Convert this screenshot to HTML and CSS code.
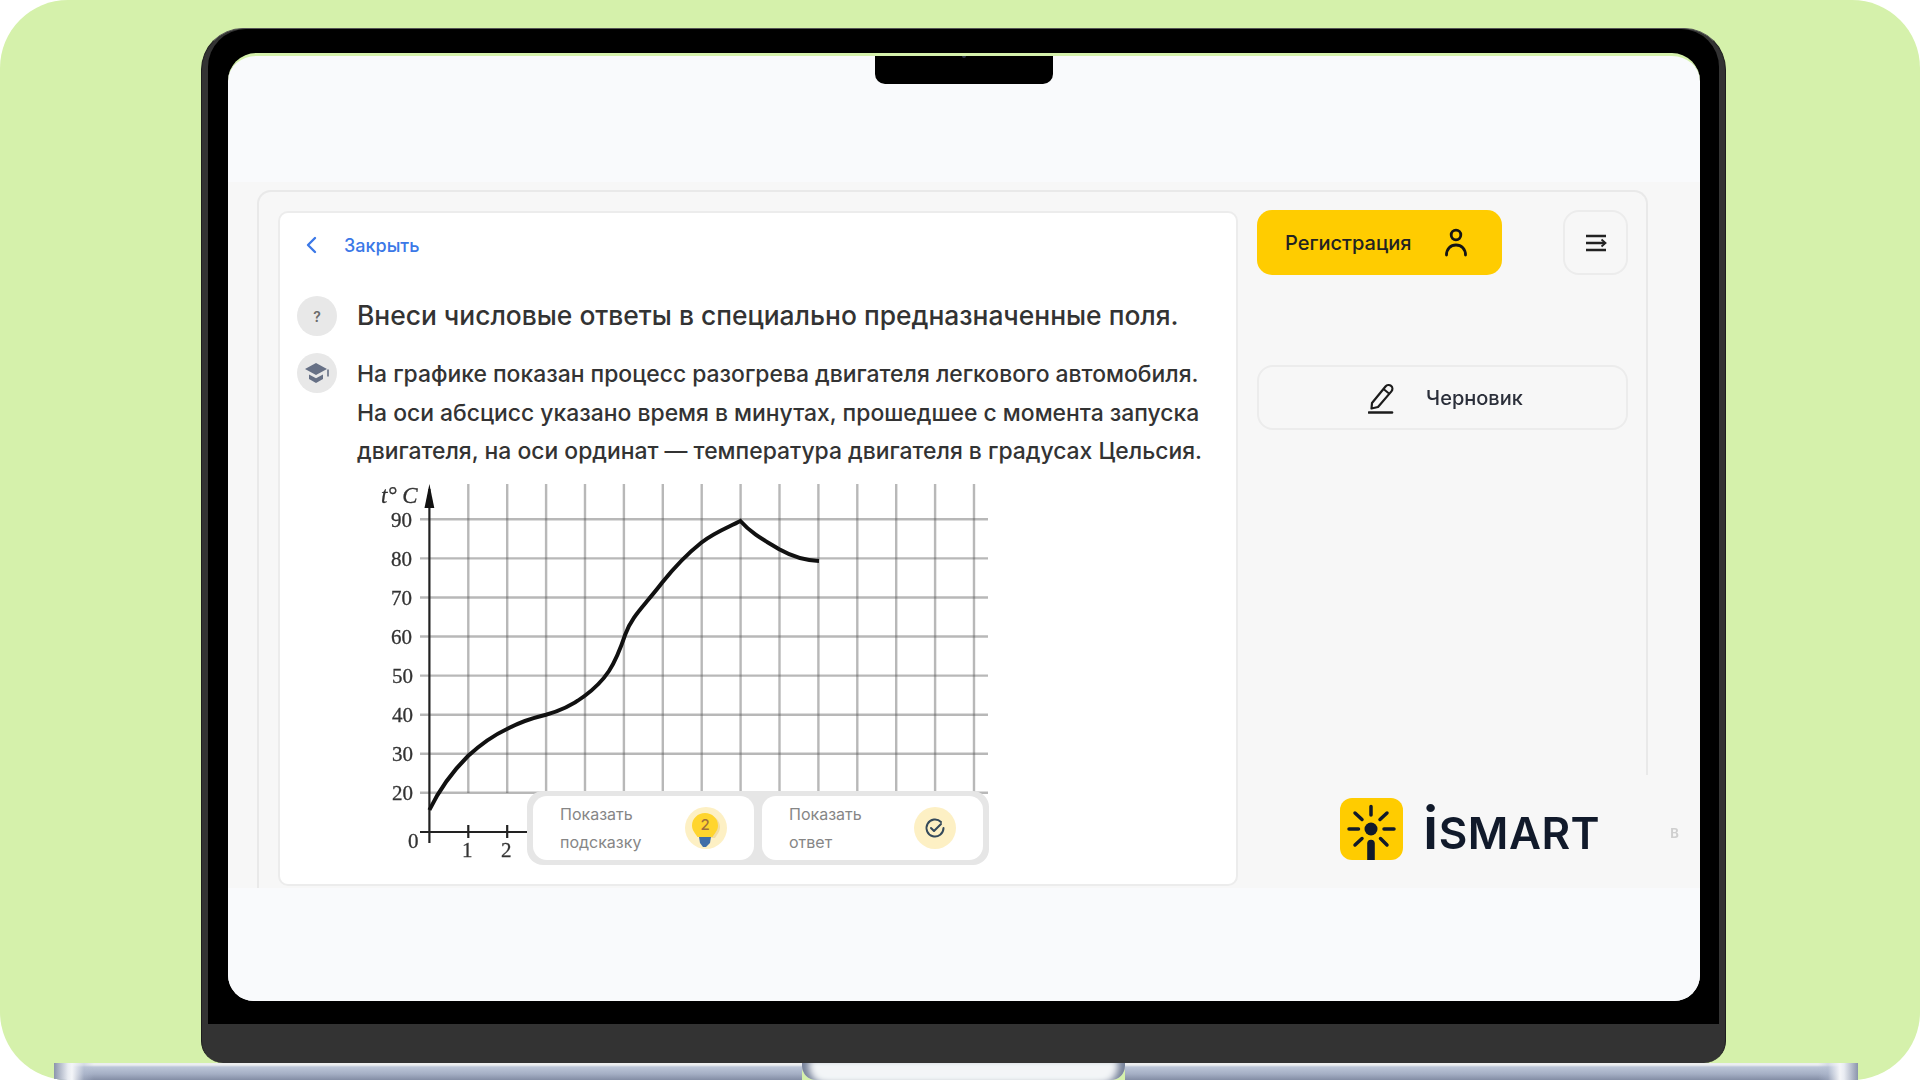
FILE: index.html
```html
<!DOCTYPE html>
<html lang="ru">
<head>
  <meta charset="UTF-8" />
  <meta name="viewport" content="width=device-width, initial-scale=1"/>
  <title>iSMART</title>
  <link rel="stylesheet" href="styles.css">
</head>
<body>

<div class="stage">
  <div class="laptop">
    <div class="bezel">
      <div class="screen">
        <div class="notch"><span class="camera"></span></div>
        <div class="screen-top"></div>

        <div class="main">
          <div class="panel">
            <!-- Task card -->
            <div class="card">
              <a class="close-row">
                <svg class="chevron" width="12" height="18" viewBox="0 0 12 18"><path d="M10 2 3 9l7 7" fill="none" stroke="#3b78e7" stroke-width="2.400" stroke-linecap="round" stroke-linejoin="round"/></svg>
                <span>Закрыть</span>
              </a>

              <div class="task-row question">
                <div class="round-icon q-mark">?</div>
                <h2>Внеси числовые ответы в специально предназначенные поля.</h2>
              </div>

              <div class="task-row body-row">
                <div class="round-icon">
                  <svg width="26" height="22" viewBox="0 0 26 22"><path d="M12 1 1 7l11 6 11-6z" fill="#667085"/><path d="M5 12.500v4.500l7 4 7-4v-4.500l-7 3.800z" fill="#667085"/><path d="M24 7.500v7" stroke="#667085" stroke-width="1.600" fill="none"/></svg>
                </div>
                <p>На графике показан процесс разогрева двигателя легкового автомобиля.<br>На оси абсцисс указано время в минутах, прошедшее с момента запуска<br>двигателя, на оси ординат — температура двигателя в градусах Цельсия.</p>
              </div>

              <div class="chart">
                <svg class="chart-svg" width="640" height="400" viewBox="0 0 640 400">
                  <path class="grid" d="M108.300 13V322M147.200 13V322M186.100 13V322M225 13V322M263.900 13V322M302.800 13V322M341.700 13V322M380.600 13V322M419.500 13V322M458.400 13V322M497.300 13V322M536.200 13V322M575.100 13V322M614 13V322"/>
                  <path class="grid" d="M60 48.300H628M60 87.400H628M60 126.500H628M60 165.500H628M60 204.600H628M60 243.700H628M60 282.700H628M60 321.800H628"/>
                  <path class="axis" d="M69.400 18V372M60 361H180M108.300 354V367M147.200 354V367"/>
                  <path d="M69.400 13 64.500 37h9.800z" fill="#111"/>
                  <path class="curve" d="M69.400 339C80 317 92 301 108 285C120 274 132 265 147 258C160 251 172 247 186 243.700C200 240 214 233 224.500 225C234 218 243 209 249 200C256 189 261 176 265.300 163.300C270 150 278 141 288 129C293 123 298 117 302 111.700C315 95.500 327 83 341.200 71.700C355 61 367 57 380.400 50C392 63 404 69 419.200 78.300C432 85.500 445 89.500 459 90"/>
                  <text class="it" x="21" y="32">t° C</text>
                  <text x="31" y="56">90</text>
                  <text x="31" y="95">80</text>
                  <text x="31" y="134">70</text>
                  <text x="31" y="173">60</text>
                  <text x="32" y="212">50</text>
                  <text x="32" y="251">40</text>
                  <text x="32" y="290">30</text>
                  <text x="32" y="329">20</text>
                  <text x="48" y="377">0</text>
                  <text x="102" y="386">1</text>
                  <text x="141" y="386">2</text>
                </svg>

                <div class="hints">
                  <div class="hint">
                    <span class="hint-text">Показать<br>подсказку</span>
                    <div class="hint-icon">
                      <svg width="42" height="42" viewBox="0 0 42 42"><path d="M20 7c7.500 0 13 5.500 13 12 0 5-3 7.500-5 11H16c-2-3.500-5-6-5-11 0-6.500 2-12 9-12z" fill="#e8c980" opacity=".5" transform="translate(2 1)"/><path d="M20 6c7 0 13 5.500 13 12.500 0 5-3.500 8-5.500 11.500h-15C10.500 26.500 7 23.500 7 18.500 7 11.500 13 6 20 6z" fill="#ffd52e"/><path d="M14 30h12l-1 6-4 4h-3l-3-4z" fill="#3f6ea8"/><text x="20" y="23" class="bulb-num">2</text></svg>
                    </div>
                  </div>
                  <div class="hint">
                    <span class="hint-text">Показать<br>ответ</span>
                    <div class="hint-icon">
                      <svg width="42" height="42" viewBox="0 0 42 42"><path d="M27 15A8.500 8.500 0 1 0 29.500 21" fill="none" stroke="#34495a" stroke-width="2" stroke-linecap="round"/><path d="m17 21 3 3 7-7" fill="none" stroke="#34495a" stroke-width="2" stroke-linecap="round" stroke-linejoin="round"/></svg>
                    </div>
                  </div>
                </div>
              </div>
            </div>

            <!-- Right rail -->
            <div class="rail">
              <div class="rail-actions">
                <button class="btn-register">
                  <span>Регистрация</span>
                  <svg width="24" height="30" viewBox="0 0 24 30"><circle cx="12" cy="7" r="4.800" fill="none" stroke="#151515" stroke-width="2.800"/><path d="M2.500 27c0-6 4-10 9.500-10s9.500 4 9.500 10" fill="none" stroke="#151515" stroke-width="2.800" stroke-linecap="round"/></svg>
                </button>
                <button class="btn-menu">
                  <svg width="24" height="22" viewBox="0 0 24 22"><path d="M2 4h20M2 11h19M2 18h20" stroke="#222" stroke-width="2.300" fill="none"/><path d="M17.500 7.500 21.500 11l-4 3.500" stroke="#222" stroke-width="1.800" fill="none"/></svg>
                </button>
              </div>

              <button class="btn-draft">
                <svg width="26" height="32" viewBox="0 0 26 32"><path d="M4 21 17.500 4.500c1.500-1.800 4-2 5.600-.6 1.600 1.300 1.700 3.700.3 5.500L10 25l-6.500 1.500z" fill="none" stroke="#1c1c1c" stroke-width="2.200" stroke-linejoin="round"/><path d="M15.500 7l5.500 4.500" stroke="#1c1c1c" stroke-width="2" fill="none"/><path d="M1 30.500h23" stroke="#1c1c1c" stroke-width="2.600" stroke-linecap="round"/></svg>
                <span>Черновик</span>
              </button>

              <div class="logo-row">
                <div class="logo-tile">
                  <svg width="63" height="62" viewBox="0 0 63 62">
                    <circle cx="31" cy="31" r="6.500" fill="#111a2b"/>
                    <path d="M31 8.500V17M9 31h9.500M44 31h10M15 15l7 6.500M47 15l-7 6.500M15 47l7-6.500M47 47l-6.500-6.500" stroke="#111a2b" stroke-width="3.500" stroke-linecap="round" fill="none"/>
                    <path d="M27.200 62V45.500a3.800 3.800 0 0 1 7.600 0V62z" fill="#111a2b"/>
                  </svg>
                </div>
                <div class="logo-word"><span class="logo-i">i</span>SMART</div>
                <span class="logo-tag">В</span>
              </div>
            </div>
          </div>
        </div>

        <div class="screen-bottom"></div>
      </div>
    </div>
  </div>

  <div class="base">
    <div class="base-side left"></div>
    <div class="base-notch"></div>
    <div class="base-side right"></div>
  </div>
</div>

</body>
</html>
```

FILE: styles.css
```css
* { box-sizing: border-box; }
html, body { margin: 0; padding: 0; background: #fff; }
body { font-family: Inter, 'Noto Sans', sans-serif; color: #333; }

.stage {
  width: 1920px; height: 1080px; overflow: hidden;
  background: #d5f1ab; border-radius: 68px;
  padding-top: 28px;
}

/* laptop frame */
.laptop {
  width: 1525px; height: 1035px; margin-left: 201px;
  background: #333; border: 1px solid #1d1d1d; border-top-color: #555; border-bottom: none;
  border-radius: 42px 42px 22px 22px;
  padding: 0 6px;
}
.bezel {
  height: 995px; background: #000; border-radius: 38px 38px 0 0;
  padding: 24px 19px 23px 20px;
}
.screen {
  position: relative; height: 948px; background: #f9fafc;
  border-top: 3px solid #d5f1ab;
  border-radius: 28px 28px 26px 26px; overflow: hidden;
  display: flex; flex-direction: column;
}
.notch {
  position: absolute; left: 647px; top: -3px; width: 178px; height: 31px;
  background: #000; border-radius: 0 0 10px 10px;
  display: flex; justify-content: center;
}
.camera { width: 4px; height: 4px; margin-top: 1px; border-radius: 50%; background: #2c3347; }
.screen-top { height: 126px; }
.screen-bottom { flex: 1; background: #f9fafc; }

.main { height: 706px; background: #f7f7f7; padding: 8px 0 0 29px; }
.panel {
  width: 1391px; height: 698px;
  border: 2px solid #e9e9e9; border-bottom: none; border-radius: 14px 14px 0 0;
  padding: 18px 0 0 19px;
  display: flex; gap: 19px;
  filter: blur(.35px);
}

/* task card */
.card {
  width: 960px; height: 675px; margin-top: 1px;
  background: #fff; border: 2px solid #ececec; border-radius: 10px;
  padding: 20px 0 0 17px; overflow: hidden;
}
.close-row { display: flex; align-items: center; height: 24px; color: #3b78e7; font-size: 18px; font-weight: 500; }
.chevron { margin-left: 8px; margin-right: 27px; }
.task-row { display: flex; gap: 20px; }
.question { margin-top: 39px; align-items: center; height: 40px; }
.question h2 { margin: -2px 0 0; font-size: 26.400px; font-weight: 500; color: #333; white-space: nowrap; }
.body-row { margin-top: 17px; }
.body-row p { margin: 2px 0 0; font-size: 22.900px; line-height: 38.500px; font-weight: 500; color: #333; white-space: nowrap; }
.round-icon {
  width: 40px; height: 40px; flex: none; border-radius: 50%; background: #e8e8e8;
  display: flex; align-items: center; justify-content: center;
}
.q-mark { font-size: 14px; font-weight: 600; color: #6b6b6b; }

/* chart */
.chart { position: relative; width: 640px; height: 400px; margin: 0 0 0 63px; }
.chart-svg { display: block; filter: blur(.7px); }
.chart-svg text { font-family: 'Liberation Serif', serif; font-size: 21px; fill: #333; stroke: #333; stroke-width: .3px; }
.chart-svg text.it { font-style: italic; font-size: 23px; }
.grid { stroke: #555; stroke-opacity: .42; stroke-width: 2.400; fill: none; }
.axis { stroke: #222; stroke-width: 2.200; fill: none; }
.curve { stroke: #111; stroke-width: 4; fill: none; stroke-linejoin: miter; }

.hints {
  position: absolute; left: 167px; top: 320px; width: 462px; height: 74px;
  background: #e6e6e6; border-radius: 16px; padding: 5px 6px;
  display: flex; gap: 8px;
}
.hint {
  flex: 1; background: #fff; border-radius: 14px; padding-left: 27px; padding-right: 27px;
  display: flex; align-items: center; justify-content: space-between;
}
.hint-text { font-size: 16px; line-height: 28px; color: #868686; }
.hint-icon {
  width: 42px; height: 42px; border-radius: 50%; background: #fdf0c4;
}
.hint-icon svg { display: block; }
.bulb-num { font-family: Inter, sans-serif; font-size: 15px; font-weight: 500; fill: #a0703c; text-anchor: middle; }

/* right rail */
.rail { width: 389px; display: flex; flex-direction: column; }
.rail-actions { display: flex; justify-content: space-between; padding-right: 18px; }
button { font-family: inherit; cursor: pointer; }
.btn-register {
  width: 245px; height: 65px; background: #ffcc00; border: none; border-radius: 15px;
  display: flex; align-items: center; justify-content: space-between;
  padding: 0 34px 0 28px; font-size: 20px; font-weight: 500; color: #222;
}
.btn-menu {
  width: 65px; height: 65px; background: #f7f7f7; border: 2px solid #ececec; border-radius: 16px;
  display: flex; align-items: center; justify-content: center;
}
.btn-draft {
  width: 371px; height: 65px; margin-top: 90px;
  background: #f7f7f7; border: 2px solid #ececec; border-radius: 16px;
  display: flex; align-items: center; justify-content: center; gap: 32px;
  padding-left: 12px;
  font-size: 20px; font-weight: 500; color: #2b2f3a;
}
.logo-row {
  margin-top: auto; height: 113px; margin-right: -50px;
  background: #f7f7f7; padding: 23px 0 0 83px;
  display: flex; align-items: flex-start;
}
.logo-tile { width: 63px; height: 62px; background: #ffcc00; border-radius: 12px; overflow: hidden; flex: none; }
.logo-tile svg { display: block; }
.logo-word {
  margin-left: 20px; margin-top: -6px; font-size: 44px; font-weight: 600; color: #111a2b;
  letter-spacing: .5px; line-height: 72px; white-space: nowrap;
}
.logo-i { font-size: 58px; }
.logo-tag { margin-left: 70px; margin-top: 27px; font-size: 13px; font-weight: 700; color: #cfcfcf; }

/* laptop base */
.base { display: flex; width: 1804px; height: 17px; margin-left: 54px; }
.base-side {
  flex: 1;
  background: linear-gradient(180deg, #eceef0 0, #eceef0 2px, #bcc6d8 4px, #a4aec4 11px, #838da5 17px);
}
.base-side.left {
  flex: none; width: 748px;
  background:
    linear-gradient(90deg, #8b95ac 0, #e9ecf2 14px, #f4f5f8 18px, rgba(180,190,210,.4) 30px, rgba(180,190,210,0) 40px),
    linear-gradient(180deg, #eceef0 0, #eceef0 2px, #bcc6d8 4px, #a4aec4 11px, #838da5 17px);
}
.base-side.right {
  background:
    linear-gradient(270deg, #8b95ac 0, #e9ecf2 14px, #f4f5f8 18px, rgba(180,190,210,.4) 30px, rgba(180,190,210,0) 40px),
    linear-gradient(180deg, #eceef0 0, #eceef0 2px, #bcc6d8 4px, #a4aec4 11px, #838da5 17px);
}
.base-notch {
  width: 323px; background: #f3f5f7;
  box-shadow: inset 12px 0 7px -5px #77829a, inset -12px 0 7px -5px #77829a;
  border-radius: 0 0 14px 14px;
}
```
